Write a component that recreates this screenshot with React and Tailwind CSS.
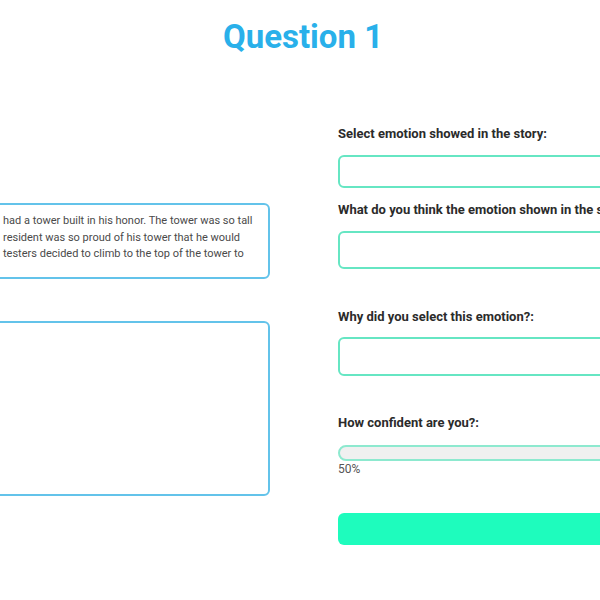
import React from 'react';

const Label = ({ children, className = '' }) => (
  <p className={`text-[13px] leading-[16px] font-bold text-[#2b2b2b] whitespace-nowrap ${className}`}>{children}</p>
);

export default function App() {
  return (
    <div className="w-[600px] h-[600px] overflow-hidden bg-white font-['Roboto',sans-serif]">
      <h1 className="mt-[17px] pl-[6px] text-center text-[33px] leading-[40px] font-bold text-[#29b0ea]">Question 1</h1>

      <div className="mt-[69px] flex items-start">
        {/* story column */}
        <div className="-ml-[40px] w-[310px] shrink-0 mt-[77px]">
          <div className="h-[76px] rounded-[6px] border-2 border-[#63c3ea] pl-[41px] pt-[8px] text-[11px] leading-[16.5px] text-[#4a4a4a]">
            <span className="block whitespace-nowrap">had a tower built in his honor. The tower was so tall</span>
            <span className="block whitespace-nowrap">resident was so proud of his tower that he would</span>
            <span className="block whitespace-nowrap">testers decided to climb to the top of the tower to</span>
          </div>
          <div className="mt-[42px] h-[175px] rounded-[6px] border-2 border-[#63c3ea] bg-white" />
        </div>

        {/* answer column */}
        <div className="ml-[68px] w-[300px] shrink-0 flex flex-col">
          <Label>Select emotion showed in the story:</Label>
          <div className="mt-[13px] h-[33px] rounded-[6px] border-2 border-[#66e6c3] bg-white" />
          <Label className="mt-[14px]">What do you think the emotion shown in the story is?:</Label>
          <div className="mt-[13px] h-[38px] rounded-[6px] border-2 border-[#66e6c3] bg-white" />
          <Label className="mt-[40px]">Why did you select this emotion?:</Label>
          <div className="mt-[12px] h-[39px] rounded-[6px] border-2 border-[#66e6c3] bg-white" />
          <Label className="mt-[39px]">How confident are you?:</Label>
          <div className="mt-[14px] h-[16px] rounded-full border-2 border-[#8de9cf] bg-[#f0f0f0]" />
          <p className="mt-[1px] text-[12px] leading-[14px] text-[#555]">50%</p>
          <div className="mt-[37px] h-[32px] rounded-[6px] bg-[#1efcbd]" />
        </div>
      </div>
    </div>
  );
}
